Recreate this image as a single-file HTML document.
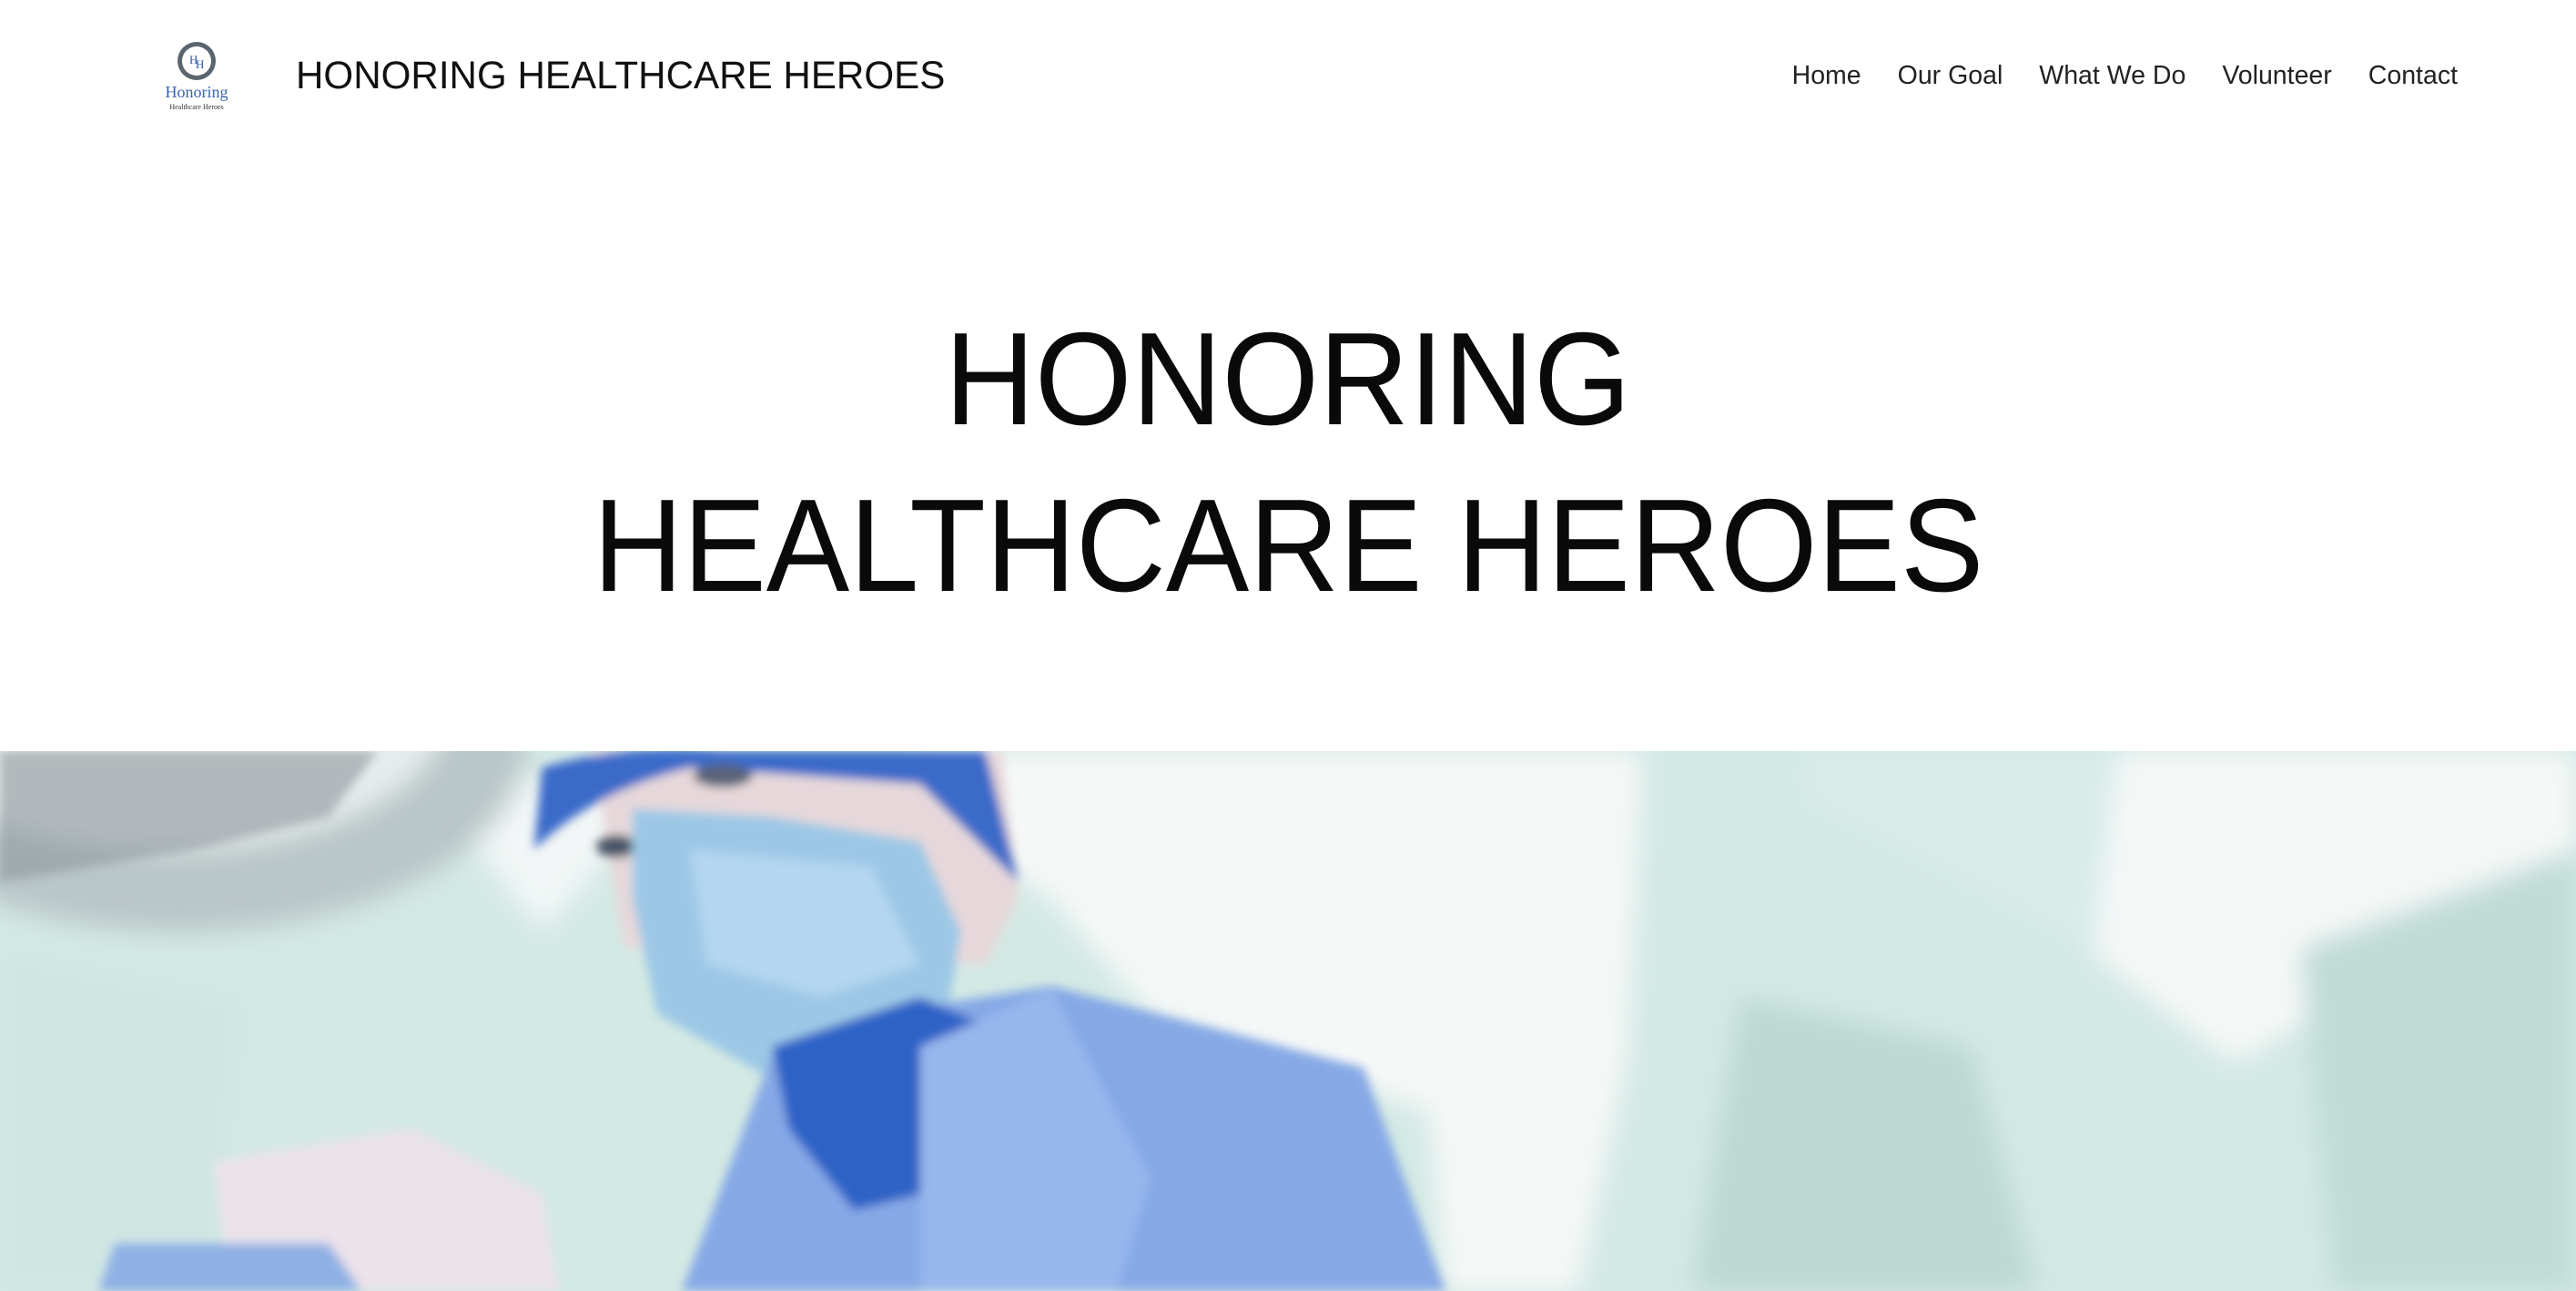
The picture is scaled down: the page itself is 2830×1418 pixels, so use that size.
<!DOCTYPE html>
<html><head><meta charset="utf-8"><style>
*{margin:0;padding:0;box-sizing:border-box}
body{width:2830px;height:1418px;background:#fff;position:relative;overflow:hidden;font-family:"Liberation Sans",sans-serif;color:#111}
.title{position:absolute;left:325px;top:59px;font-size:43px;white-space:nowrap;transform:scaleX(0.98);transform-origin:left top;letter-spacing:0}
.nav{position:absolute;right:130px;top:67px;font-size:28.5px;display:flex;gap:40px;color:#222}
.hero{position:absolute;left:0;width:2830px;text-align:center;font-size:145px;line-height:1;white-space:nowrap;color:#0a0a0a}
.hero span{display:inline-block;transform:scaleX(0.945)}
.img{position:absolute;left:0;top:825px;width:2830px;height:593px}
</style></head><body>
<svg style="position:absolute;left:170px;top:40px" width="100" height="90" viewBox="0 0 100 90">
<circle cx="46" cy="27" r="21" fill="#5a6570"/><circle cx="46" cy="27" r="16" fill="#fff"/>
<text x="38" y="30" font-family="Liberation Serif" font-size="13" fill="#2d5aa8">H</text>
<text x="45" y="35" font-family="Liberation Serif" font-size="13" fill="#2d5aa8">H</text>
<text x="46" y="67" text-anchor="middle" font-family="Liberation Serif" font-size="18" fill="#3a63b0">Honoring</text>
<text x="46" y="80" text-anchor="middle" font-family="Liberation Serif" font-size="8" fill="#333">Healthcare Heroes</text>
</svg>
<div class="title">HONORING HEALTHCARE HEROES</div>
<div class="nav"><span>Home</span><span>Our Goal</span><span>What We Do</span><span>Volunteer</span><span>Contact</span></div>
<div class="hero" style="top:344px"><span>HONORING</span></div>
<div class="hero" style="top:527px"><span>HEALTHCARE HEROES</span></div>
<svg class="img" viewBox="0 0 1568 329" preserveAspectRatio="none">
<defs><filter id="b" x="-20%" y="-20%" width="140%" height="140%"><feGaussianBlur stdDeviation="8"/></filter>
<filter id="s"><feGaussianBlur stdDeviation="3"/></filter></defs>
<rect width="1568" height="329" fill="#d3e9e4"/>
<g filter="url(#b)">
<polygon points="560,0 1000,0 990,190 960,330 880,330 870,220 700,160 640,90 560,40" fill="#f6f8f8"/>
<polygon points="280,20 420,10 330,110 290,60" fill="#f2f6f6"/>
<polygon points="1290,0 1568,0 1568,70 1360,190 1275,125" fill="#f6f8f8"/>
<polygon points="1100,0 1290,0 1275,120 1200,80 1100,30" fill="#d8ecea"/>
<polygon points="1060,150 1200,180 1240,329 1030,329" fill="#bcd8d3"/>
<polygon points="1400,120 1568,60 1568,329 1420,329" fill="#c0dcd7"/>
<polygon points="0,120 150,150 130,329 0,329" fill="#cfe6e3"/>
<ellipse cx="110" cy="-5" rx="210" ry="115" fill="#b9c6c8"/>
<ellipse cx="100" cy="-20" rx="170" ry="80" fill="#e6ecec"/>
</g>
<g filter="url(#s)">
<path d="M0,0 H230 L200,40 L120,60 L0,80Z" fill="#8d969c" opacity=".6"/>
<polygon points="360,0 610,0 620,90 600,130 380,120" fill="#e6d8da"/>
<path d="M330,10 Q380,-5 440,0 L600,0 L620,80 L600,60 L560,20 L420,10 Q360,25 325,60Z" fill="#3a6bc9"/>
<ellipse cx="440" cy="15" rx="18" ry="7" fill="#5a6478"/>
<ellipse cx="375" cy="58" rx="12" ry="7" fill="#4a5468"/>
<polygon points="385,35 470,40 560,55 585,110 570,200 520,215 470,200 400,160 385,90" fill="#9cc8e6"/>
<polygon points="420,60 530,70 560,130 500,150 430,130" fill="#b4d6ee"/>
<polygon points="415,329 470,185 560,156 640,143 830,193 880,329" fill="#86a9e6"/>
<polygon points="470,180 560,150 620,175 600,260 520,280 480,230" fill="#2e62c6"/>
<polygon points="560,180 640,145 700,260 680,329 560,329" fill="#97b6ec"/>
<polygon points="130,250 250,230 330,270 340,329 140,329" fill="#ebe2ea"/>
<polygon points="70,300 200,300 220,329 60,329" fill="#8fb0e4"/>
</g>
</svg>
</body></html>
